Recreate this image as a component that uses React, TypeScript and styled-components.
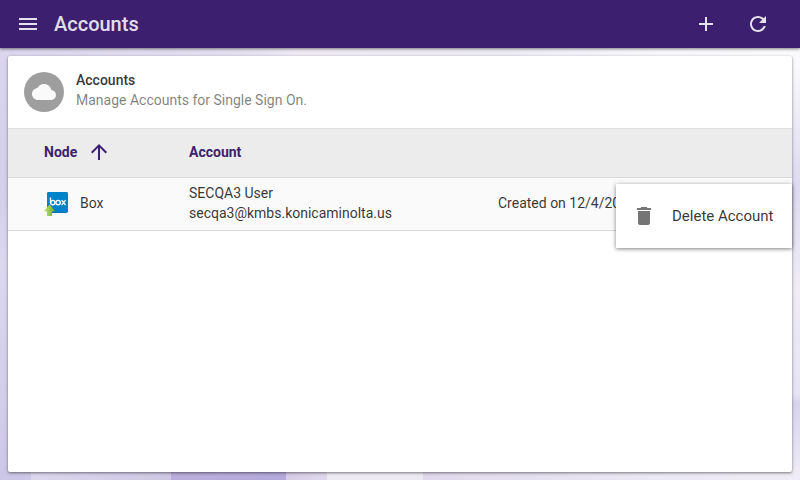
import React from "react";
import styled, { createGlobalStyle } from "styled-components";

const GlobalStyle = createGlobalStyle`
  *, *::before, *::after { box-sizing: border-box; }
  body {
    margin: 0;
    font-family: Roboto, "Liberation Sans", sans-serif;
    font-size: 14px;
    line-height: 20px;
    color: rgba(0, 0, 0, 0.8);
  }
`;

const Page = styled.div`
  display: flex;
  flex-direction: column;
  min-height: 100vh;
  background:
    linear-gradient(90deg, #cdc7e7 31px, #dcd7ec 31px, #cfc8e5 171px, #b9addb 171px, #b3a9da 286px, #d6cce6 286px, #e0d9ec 327px, #edeaf4 327px, #edeaf4 423px, #e0d9ec 423px, #ece9f6 664px, #efecf7) bottom / 100% 12px no-repeat,
    linear-gradient(90deg, #dbd6ed, #e4e0f0 240px, #efeaf6 300px, #edebf6 500px, #f7f6fb 640px, #fbfbfd) top / 100% 60px no-repeat,
    linear-gradient(#dcd8ee, #d4cfea 40%, #dcd8ee 55%, #cdc7e7) left / 50% 100% no-repeat,
    linear-gradient(#fbfbfd 12%, #dedaf0 38%, #efecf7 60%, #e6e3f4 82%, #d8d4ed 84%, #efecf7) right / 50% 100% no-repeat;
`;

const Toolbar = styled.header`
  display: flex;
  align-items: center;
  height: 48px;
  padding: 0 30px 0 16px;
  background: #3c1f6e;
  color: rgba(255, 255, 255, 0.87);
  box-shadow: 0 1px 3px rgba(0, 0, 0, 0.5);
`;

const Title = styled.h1`
  flex: 1;
  margin: 0 0 0 14px;
  font-size: 20px;
  font-weight: 500;
  line-height: 24px;
`;

const IconButton = styled.button`
  display: flex;
  padding: 0;
  border: 0;
  background: none;
  color: inherit;
  cursor: pointer;
`;

const Actions = styled.div`
  display: flex;
  gap: 28px;
`;

const Icon = styled.svg`
  display: block;
  flex: none;
  width: 24px;
  height: 24px;
  fill: currentColor;
`;

const Card = styled.main`
  position: relative;
  flex: 1;
  margin: 8px;
  border-radius: 2px;
  background: #fff;
  box-shadow: 0 1px 3px rgba(0, 0, 0, 0.5);
`;

const CardHeader = styled.section`
  display: flex;
  align-items: flex-start;
  gap: 12px;
  padding: 14px 16px 16px;
`;

const Avatar = styled.div`
  display: flex;
  align-items: center;
  justify-content: center;
  width: 40px;
  height: 40px;
  margin-top: 2px;
  border-radius: 50%;
  background: #9e9e9e;
  color: #fafafa;
`;

const Heading = styled.h2`
  margin: 0;
  font-size: 14px;
  font-weight: 500;
  line-height: 20px;
`;

const Subheading = styled.p`
  margin: 0;
  color: rgba(0, 0, 0, 0.5);
`;

const Table = styled.table`
  width: 100%;
  border-collapse: separate;
  border-spacing: 0;
  table-layout: fixed;
`;

const NodeCol = styled.col`
  width: 181px;
`;

const DateCol = styled.col`
  width: 294px;
`;

const HeadCell = styled.th`
  height: 50px;
  padding: 0 0 2px;
  border-top: 1px solid #e0e0e0;
  border-bottom: 1px solid #dadada;
  background: #ececec;
  color: #3c1f6e;
  font-weight: 700;
  text-align: left;
  &:first-child { padding-left: 36px; }
`;

const Cell = styled.td`
  height: 53px;
  padding: 0 0 2px;
  border-bottom: 1px solid #dadada;
  background: #fafafa;
  white-space: nowrap;
  &:first-child { padding-left: 36px; }
`;

const Inline = styled.span`
  display: flex;
  align-items: center;
  gap: 10px;
`;

const SortButton = styled(IconButton)`
  align-items: center;
  gap: 10px;
  font: inherit;
`;

const BoxIcon = styled.svg`
  display: block;
  width: 26px;
  height: 26px;
`;

const Menu = styled.div`
  position: absolute;
  top: 128px;
  right: 0;
  min-width: 176px;
  padding: 8px 0;
  background: #fff;
  box-shadow: 0 1px 4px rgba(0, 0, 0, 0.5);
`;

const MenuItem = styled.button`
  display: flex;
  align-items: center;
  gap: 16px;
  width: 100%;
  height: 48px;
  padding: 0 16px;
  border: 0;
  background: none;
  color: rgba(0, 0, 0, 0.8);
  font: 15px/20px Roboto, "Liberation Sans", sans-serif;
  white-space: nowrap;
  cursor: pointer;
  svg { color: #757575; }
`;

const paths = {
  menu: "M3 18h18v-2H3v2zm0-5h18v-2H3v2zm0-7v2h18V6H3z",
  add: "M19 13h-6v6h-2v-6H5v-2h6V5h2v6h6v2z",
  refresh:
    "M17.65 6.35C16.2 4.9 14.21 4 12 4c-4.42 0-7.99 3.58-7.99 8s3.57 8 7.99 8c3.73 0 6.84-2.55 7.73-6h-2.08c-.82 2.33-3.04 4-5.65 4-3.31 0-6-2.69-6-6s2.69-6 6-6c1.66 0 3.14.69 4.22 1.78L13 11h7V4l-2.35 2.35z",
  cloud:
    "M19.35 10.04C18.67 6.59 15.64 4 12 4 9.11 4 6.6 5.64 5.35 8.04 2.34 8.36 0 10.91 0 14c0 3.31 2.69 6 6 6h13c2.76 0 5-2.24 5-5 0-2.64-2.05-4.78-4.65-4.96z",
  up: "M4 12l1.41 1.41L11 7.83V20h2V7.83l5.58 5.59L20 12l-8-8-8 8z",
  trash: "M6 19c0 1.1.9 2 2 2h8c1.1 0 2-.9 2-2V7H6v12zM19 4h-3.5l-1-1h-5l-1 1H5v2h14V4z",
};

function Glyph({ name }: { name: keyof typeof paths }) {
  return (
    <Icon viewBox="0 0 24 24" aria-hidden="true">
      <path d={paths[name]} />
    </Icon>
  );
}

function BoxLogo() {
  return (
    <BoxIcon viewBox="0 0 26 26" role="img" aria-label="Box">
      <defs>
        <linearGradient id="arrow">
          <stop offset="0" stopColor="#c3e06a" />
          <stop offset="1" stopColor="#6fae2c" />
        </linearGradient>
      </defs>
      <rect x="3" y="2" width="21" height="21" rx="2" fill="#0a6fae" />
      <rect x="3" y="2" width="21" height="20" rx="2" fill="#0282c8" />
      <g fill="none" stroke="#fff" strokeWidth="1.4" strokeLinecap="round" strokeLinejoin="round">
        <path d="M6.5 8v4.5" />
        <circle cx="8.8" cy="12.6" r="2.2" />
        <circle cx="14.1" cy="12.6" r="2.2" />
        <path d="M18 10.6l3.2 4M21.2 10.6l-3.2 4" />
      </g>
      <path d="M5.500 14.500L10.500 20.500V21.500H8V26H3V21.500H0.500V20.500z" fill="url(#arrow)" />
    </BoxIcon>
  );
}

const accounts = [
  { node: "Box", user: "SECQA3 User", email: "secqa3@kmbs.konicaminolta.us", created: "12/4/2017" },
];

export default function App() {
  return (
    <Page>
      <GlobalStyle />
      <Toolbar>
        <IconButton aria-label="Menu"><Glyph name="menu" /></IconButton>
        <Title>Accounts</Title>
        <Actions>
          <IconButton aria-label="Add account"><Glyph name="add" /></IconButton>
          <IconButton aria-label="Refresh"><Glyph name="refresh" /></IconButton>
        </Actions>
      </Toolbar>
      <Card>
        <CardHeader>
          <Avatar><Glyph name="cloud" /></Avatar>
          <div>
            <Heading>Accounts</Heading>
            <Subheading>Manage Accounts for Single Sign On.</Subheading>
          </div>
        </CardHeader>
        <Table>
          <colgroup><NodeCol /><col /><DateCol /></colgroup>
          <thead>
            <tr>
              <HeadCell scope="col" aria-sort="ascending">
                <SortButton>Node<Glyph name="up" /></SortButton>
              </HeadCell>
              <HeadCell scope="col">Account</HeadCell>
              <HeadCell scope="col" aria-label="Created" />
            </tr>
          </thead>
          <tbody>
            {accounts.map((a) => (
              <tr key={a.email}>
                <Cell><Inline><BoxLogo />{a.node}</Inline></Cell>
                <Cell>{a.user}<br />{a.email}</Cell>
                <Cell>Created on {a.created}</Cell>
              </tr>
            ))}
          </tbody>
        </Table>
        <Menu role="menu">
          <MenuItem role="menuitem"><Glyph name="trash" />Delete Account</MenuItem>
        </Menu>
      </Card>
    </Page>
  );
}
